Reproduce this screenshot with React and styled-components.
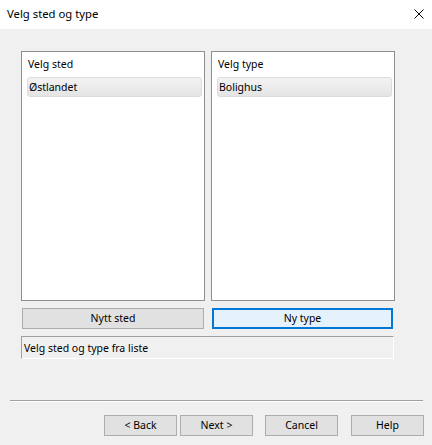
import React from 'react'
import styled, { createGlobalStyle } from 'styled-components'

const GlobalStyle = createGlobalStyle`
    html, body {
        margin: 0;
        padding: 0;
        background: #f0f0f0;
    }
    * {
        box-sizing: border-box;
    }
`;

const places = ['Østlandet'];
const types = ['Bolighus'];

const ListPanel = ({title, items}) => (
    <ListBox>
        <ListHeader>{title}</ListHeader>
        {items.map(item => (
            <ListItem key={item}>{item}</ListItem>
        ))}
    </ListBox>
);

const App = () => {
    return (
        <Window>
            <GlobalStyle/>
            <TitleBar>
                <Title>Velg sted og type</Title>
                <CloseButton aria-label="Lukk">
                    <svg width="10" height="10" viewBox="0 0 10 10">
                        <path d="M0.5 0.5 L9.5 9.5 M9.5 0.5 L0.5 9.5" stroke="#000" strokeWidth="1" fill="none"/>
                    </svg>
                </CloseButton>
            </TitleBar>
            <Body>
                <ListsRow>
                    <ListPanel title="Velg sted" items={places}/>
                    <ListPanel title="Velg type" items={types}/>
                </ListsRow>
                <ActionRow>
                    <Button>Nytt sted</Button>
                    <Button focused>Ny type</Button>
                </ActionRow>
                <StatusBox>Velg sted og type fra liste</StatusBox>
            </Body>
            <Separator/>
            <Footer>
                <Button wizard>&lt; Back</Button>
                <Button wizard gap={3}>Next &gt;</Button>
                <Button wizard gap={12}>Cancel</Button>
                <Button wizard gap={13}>Help</Button>
            </Footer>
        </Window>
    )
};

export default App

const Window = styled.div`
    width: 432px;
    height: 445px;
    background: #f0f0f0;
    display: flex;
    flex-direction: column;
    font-family: "Segoe UI", "Noto Sans", "Liberation Sans", sans-serif;
    font-size: 10.5px;
    color: #000;
    overflow: hidden;
`;

const TitleBar = styled.div`
    height: 29px;
    background: #fff;
    display: flex;
    align-items: center;
    justify-content: space-between;
    padding: 0 8px 2px 7px;
`;

const Title = styled.span`
    font-size: 11.3px;
    line-height: 16px;
`;

const CloseButton = styled.div`
    width: 10px;
    height: 10px;
    display: flex;
    margin-top: 1px;
`;

const Body = styled.div`
    padding: 22px 38px 0 21px;
    display: flex;
    flex-direction: column;
`;

const ListsRow = styled.div`
    display: grid;
    grid-template-columns: 184px 184px;
    column-gap: 6px;
    height: 250px;
`;

const ListBox = styled.div`
    background: #fff;
    border: 1px solid #8e8f8f;
    padding: 2px 2px 0 5px;
    display: flex;
    flex-direction: column;
`;

const ListHeader = styled.div`
    height: 23px;
    line-height: 21px;
    padding-left: 1px;
`;

const ListItem = styled.div`
    height: 20px;
    line-height: 18px;
    padding-left: 1px;
    border: 1px solid #dcdcdc;
    border-radius: 3px;
    background: linear-gradient(#f3f3f3, #e4e4e4);
`;

const ActionRow = styled.div`
    display: grid;
    grid-template-columns: 182px 181px;
    column-gap: 8px;
    padding-left: 1px;
    margin-top: 7px;
`;

const Button = styled.div`
    height: 21px;
    display: flex;
    align-items: center;
    justify-content: center;
    background: ${p => p.focused ? '#e5f1fb' : '#e1e1e1'};
    border: ${p => p.focused ? '2px solid #0078d7' : '1px solid #adadad'};
    width: ${p => p.wizard ? '73px' : 'auto'};
    flex-shrink: 0;
    margin-left: ${p => p.gap || 0}px;
    padding-bottom: 1px;
`;

const StatusBox = styled.div`
    margin-top: 7px;
    height: 23px;
    border-top: 1px solid #a0a0a0;
    border-left: 1px solid #a0a0a0;
    border-right: 1px solid #fff;
    border-bottom: 1px solid #fff;
    padding: 0 0 0 2px;
    display: flex;
    align-items: center;
`;

const Separator = styled.div`
    margin: 41px 9px 0 10px;
    height: 2px;
    border-top: 1px solid #a0a0a0;
    border-bottom: 1px solid #fff;
`;

const Footer = styled.div`
    display: flex;
    justify-content: flex-end;
    padding: 13px 8px 0 0;
`;
